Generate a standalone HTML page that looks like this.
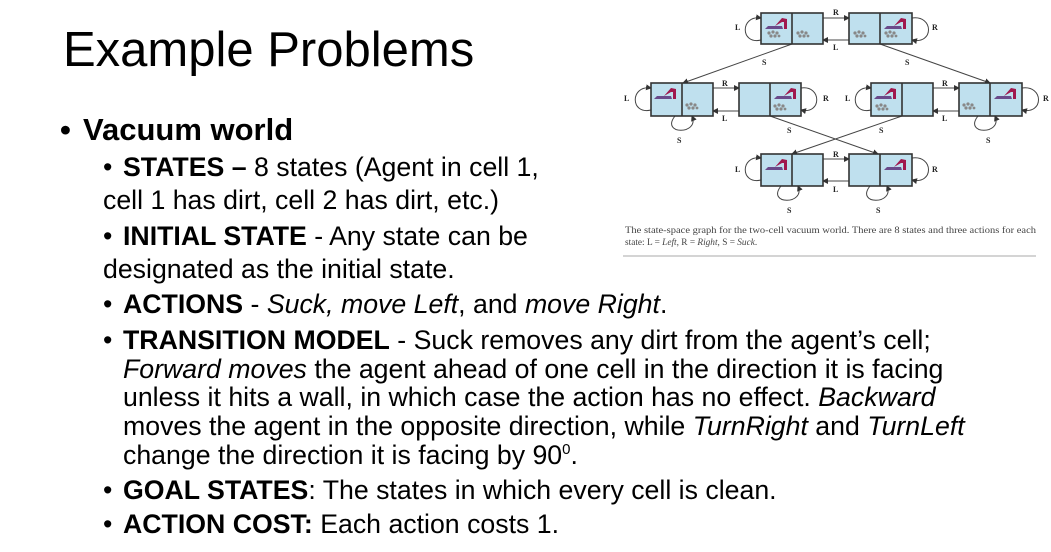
<!DOCTYPE html>
<html><head><meta charset="utf-8"><style>
html,body{margin:0;padding:0;background:#fff;width:1051px;height:552px;overflow:hidden;position:relative;font-family:"Liberation Sans",Arial,sans-serif;color:#000}
.l{position:absolute;white-space:nowrap;font-size:26.7px;line-height:30px}
.t{position:absolute;left:63px;top:22px;font-size:49px;line-height:56px}
b{font-weight:bold}
.bu{display:inline-block;width:20px}
</style></head><body>
<div class="t">Example Problems</div>
<div class="l" style="left:60px;top:112px;font-size:31px;line-height:36px"><b><span class="bu" style="width:23px">•</span>Vacuum world</b></div>
<div class="l" style="left:103px;top:152px"><span class="bu">•</span><b>STATES –</b> 8 states (Agent in cell 1,</div>
<div class="l" style="left:103px;top:185px">cell 1 has dirt, cell 2 has dirt, etc.)</div>
<div class="l" style="left:103px;top:221px"><span class="bu">•</span><b>INITIAL STATE</b> - Any state can be</div>
<div class="l" style="left:103px;top:254px">designated as the initial state.</div>
<div class="l" style="left:103px;top:289px"><span class="bu">•</span><b>ACTIONS</b> - <i>Suck, move Left</i>, and <i>move Right</i>.</div>
<div class="l" style="left:103px;top:325px"><span class="bu">•</span><b>TRANSITION MODEL</b> - Suck removes any dirt from the agent’s cell;</div>
<div class="l" style="left:123px;top:354px"><i>Forward moves</i> the agent ahead of one cell in the direction it is facing</div>
<div class="l" style="left:123px;top:382px">unless it hits a wall, in which case the action has no effect. <i>Backward</i></div>
<div class="l" style="left:123px;top:411px">moves the agent in the opposite direction, while <i>TurnRight</i> and <i>TurnLeft</i></div>
<div class="l" style="left:123px;top:440px">change the direction it is facing by 90<sup style="font-size:15px;line-height:0">0</sup>.</div>
<div class="l" style="left:103px;top:475px"><span class="bu">•</span><b>GOAL STATES</b>: The states in which every cell is clean.</div>
<div class="l" style="left:103px;top:509px"><span class="bu">•</span><b>ACTION COST:</b> Each action costs 1.</div>

<svg style="position:absolute;left:0;top:0" width="1051" height="552">
<defs>
<g id="ag"><path d="M0 13 L18 13 L17 10 L3 10 Z" fill="#6a4a8a"/><path d="M10 10 L17 2 L22 3 L22 13 L19 13 L19 6 L17 6 Z" fill="#a0184e"/></g>
<g id="dt" fill="#888"><circle cx="0" cy="0" r="1.6"/><circle cx="4" cy="-1" r="1.6"/><circle cx="8" cy="0" r="1.6"/><circle cx="2" cy="3" r="1.6"/><circle cx="6" cy="3" r="1.6"/><circle cx="10" cy="3" r="1.4"/></g>
<marker id="ar" markerWidth="6" markerHeight="6" refX="5" refY="3" orient="auto"><path d="M0 0L6 3L0 6Z" fill="#333"/></marker>
</defs>
<g stroke="#444" stroke-width="1" fill="none" marker-end="url(#ar)">
<line x1="823" y1="18" x2="849" y2="18"/><line x1="849" y1="40" x2="823" y2="40"/>
<line x1="713" y1="88" x2="739" y2="88"/><line x1="739" y1="111" x2="713" y2="111"/>
<line x1="933" y1="88" x2="959" y2="88"/><line x1="959" y1="111" x2="933" y2="111"/>
<line x1="823" y1="159" x2="849" y2="159"/><line x1="849" y1="181" x2="823" y2="181"/>
<line x1="792" y1="44" x2="683" y2="83"/><line x1="880" y1="44" x2="990" y2="83"/>
<line x1="770" y1="116" x2="878" y2="154"/><line x1="902" y1="116" x2="792" y2="154"/>
<path d="M761 40 C740 45 740 15 761 18"/><path d="M912 18 C934 15 934 45 912 40"/>
<path d="M651 110 C630 115 630 85 651 88"/><path d="M801 88 C822 85 822 115 801 110"/>
<path d="M871 110 C850 115 850 85 871 88"/><path d="M1022 88 C1044 85 1044 115 1022 110"/>
<path d="M761 180 C740 185 740 155 761 158"/><path d="M912 158 C934 155 934 185 912 180"/>
<path d="M675 116 C660 135 700 135 692 116"/><path d="M978 116 C963 135 1003 135 995 116"/>
<path d="M781 186 C766 205 806 205 798 186"/><path d="M870 186 C855 205 895 205 887 186"/>
</g>
<g fill="#bfe0ee" stroke="#333" stroke-width="1.6">
<rect x="761" y="13" width="62" height="31"/><line x1="792" y1="13" x2="792" y2="44"/>
<rect x="849" y="13" width="63" height="31"/><line x1="880" y1="13" x2="880" y2="44"/>
<rect x="651" y="83" width="62" height="33"/><line x1="682" y1="83" x2="682" y2="116"/>
<rect x="739" y="83" width="62" height="33"/><line x1="770" y1="83" x2="770" y2="116"/>
<rect x="871" y="83" width="62" height="33"/><line x1="902" y1="83" x2="902" y2="116"/>
<rect x="959" y="83" width="63" height="33"/><line x1="990" y1="83" x2="990" y2="116"/>
<rect x="761" y="154" width="62" height="32"/><line x1="792" y1="154" x2="792" y2="186"/>
<rect x="849" y="154" width="63" height="32"/><line x1="880" y1="154" x2="880" y2="186"/>
</g>
<use href="#ag" x="765" y="16"/><use href="#ag" x="884" y="16"/>
<use href="#ag" x="654" y="86"/><use href="#ag" x="774" y="86"/>
<use href="#ag" x="874" y="86"/><use href="#ag" x="994" y="86"/>
<use href="#ag" x="765" y="157"/><use href="#ag" x="884" y="157"/>
<use href="#dt" x="769" y="33"/><use href="#dt" x="798" y="33"/><use href="#dt" x="855" y="33"/><use href="#dt" x="886" y="33"/>
<use href="#dt" x="687" y="105"/><use href="#dt" x="775" y="106"/><use href="#dt" x="877" y="106"/><use href="#dt" x="964" y="105"/>
<g font-family="Liberation Serif,serif" font-weight="bold" font-size="8" fill="#222">
<text x="833" y="15">R</text><text x="833" y="50">L</text><text x="735" y="30">L</text><text x="932" y="30">R</text>
<text x="762" y="65">S</text><text x="905" y="65">S</text>
<text x="722" y="86">R</text><text x="722" y="121">L</text><text x="624" y="101">L</text><text x="823" y="101">R</text>
<text x="942" y="86">R</text><text x="942" y="121">L</text><text x="845" y="101">L</text><text x="1043" y="101">R</text>
<text x="677" y="143">S</text><text x="787" y="133">S</text><text x="879" y="133">S</text><text x="986" y="143">S</text>
<text x="833" y="157">R</text><text x="833" y="192">L</text><text x="735" y="172">L</text><text x="932" y="172">R</text>
<text x="787" y="213">S</text><text x="876" y="213">S</text>
</g>
<g font-family="Liberation Serif,serif" font-size="9.3" fill="#444">
<text x="625" y="233" textLength="411" lengthAdjust="spacingAndGlyphs">The state-space graph for the two-cell vacuum world. There are 8 states and three actions for each</text>
<text x="625" y="245">state: L = <tspan font-style="italic">Left</tspan>, R = <tspan font-style="italic">Right</tspan>, S = <tspan font-style="italic">Suck</tspan>.</text>
</g>
<line x1="623" y1="256" x2="1036" y2="256" stroke="#aaa" stroke-width="1"/>
</svg>
</body></html>
